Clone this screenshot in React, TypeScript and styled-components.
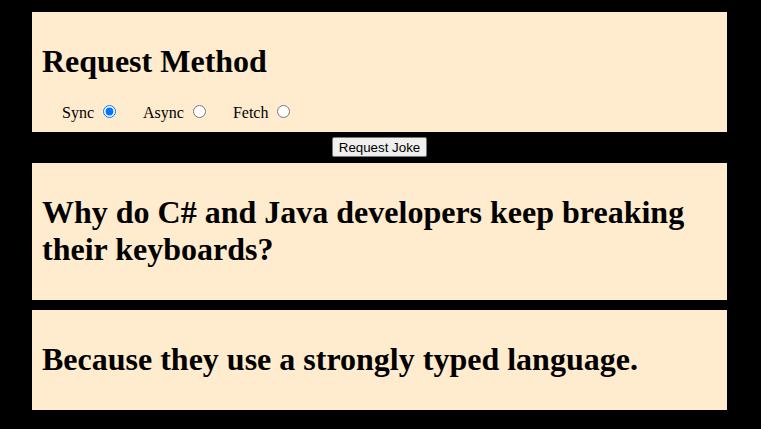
import { useState } from 'react';
import styled, { createGlobalStyle } from 'styled-components';

const GlobalStyle = createGlobalStyle`
  html, body {
    margin: 0;
    background: #000000;
  }

  body {
    font-family: 'Liberation Serif', 'Times New Roman', serif;
    color: #000000;
  }
`;

const Page = styled.div`
  display: flex;
  flex-direction: column;
  width: 695px;
  padding: 12px 32px;
`;

const Panel = styled.section<{ $gapAfter?: number }>`
  background: #ffebcd;
  padding: 10px;
  margin-bottom: ${(p) => p.$gapAfter ?? 0}px;
`;

const Heading = styled.h1`
  font-size: 32px;
  font-weight: bold;
  margin: 21.44px 0;
`;

const Methods = styled.div`
  font-size: 16px;
  line-height: 19px;
`;

const MethodLabel = styled.label`
  margin-left: 20px;
`;

const Radio = styled.input`
  width: 13px;
  height: 13px;
  margin: 3px 7px 0 5px;
  vertical-align: baseline;
`;

const ButtonRow = styled.div`
  display: flex;
  align-items: center;
  justify-content: center;
  height: 31px;
`;

const RequestButton = styled.button`
  font-family: 'Liberation Sans', Arial, sans-serif;
  font-size: 13.33px;
  padding: 1px 6px;
  height: 20px;
  color: #000000;
  background: #efefef;
  border: 1px solid #767676;
  border-radius: 2px;
`;

const methods = ['Sync', 'Async', 'Fetch'];

const App = () => {
  const [method, setMethod] = useState('Sync');

  return (
    <>
      <GlobalStyle />
      <Page>
        <Panel>
          <Heading>Request Method</Heading>
          <Methods>
            {methods.map((m) => (
              <MethodLabel key={m}>
                {m}
                {' '}
                <Radio
                  type="radio"
                  name="method"
                  checked={method === m}
                  onChange={() => setMethod(m)}
                />
              </MethodLabel>
            ))}
          </Methods>
        </Panel>
        <ButtonRow>
          <RequestButton>Request Joke</RequestButton>
        </ButtonRow>
        <Panel $gapAfter={10}>
          <Heading>Why do C# and Java developers keep breaking their keyboards?</Heading>
        </Panel>
        <Panel>
          <Heading>Because they use a strongly typed language.</Heading>
        </Panel>
      </Page>
    </>
  );
};

export default App;
